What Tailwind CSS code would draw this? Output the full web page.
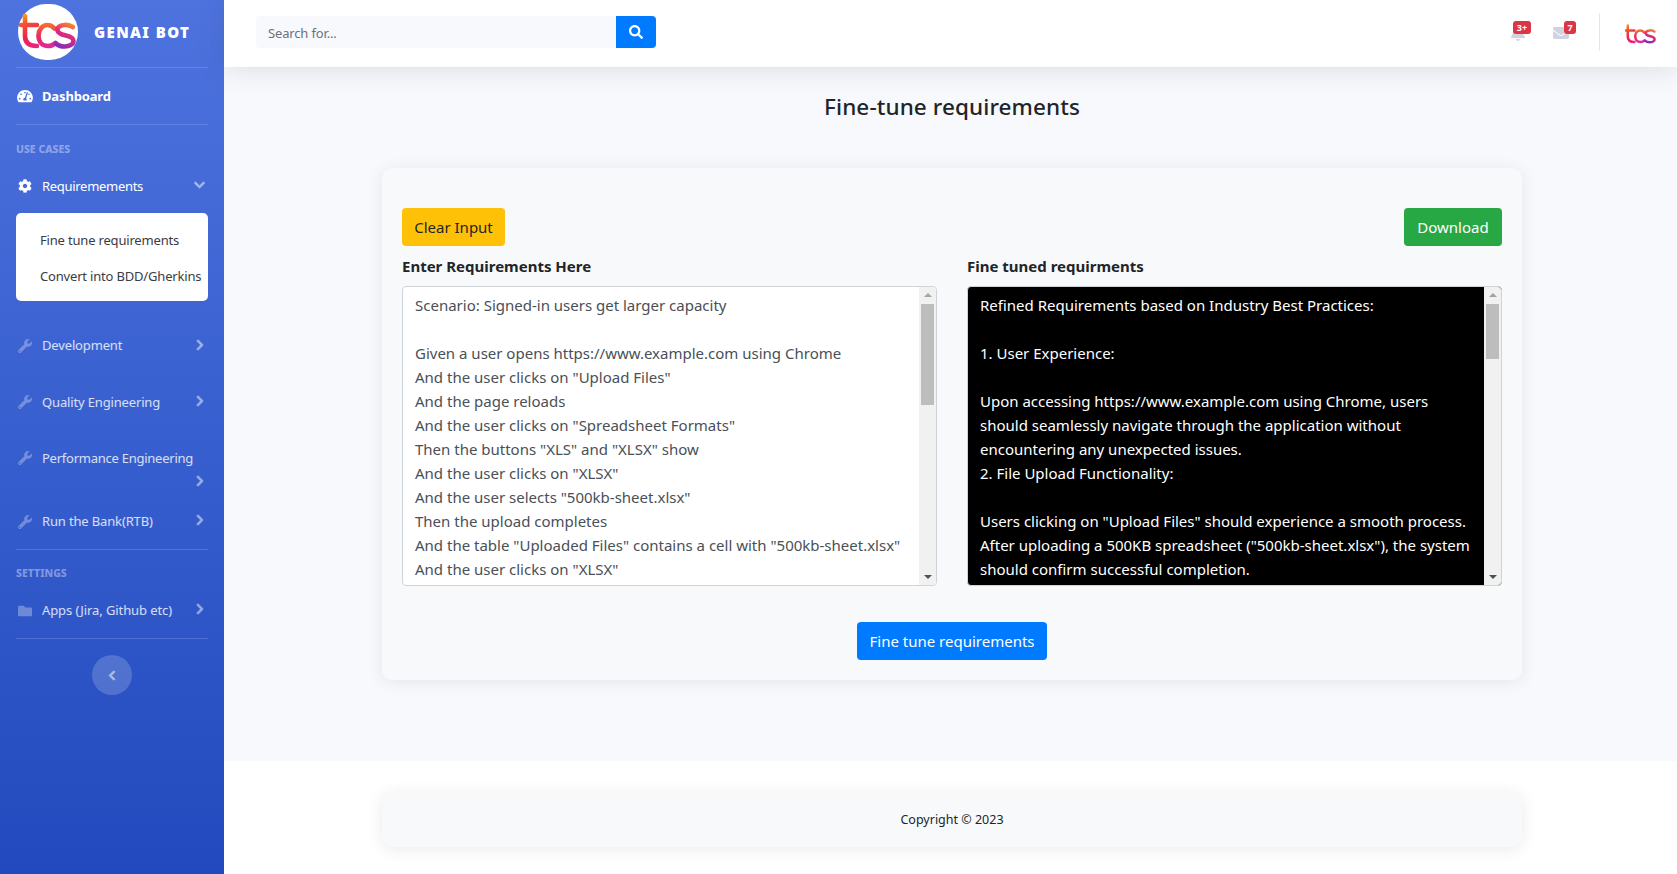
<!DOCTYPE html>
<html lang="en">
  <head>
    <meta charset="UTF-8" />
    <meta name="viewport" content="width=device-width, initial-scale=1.0" />
    <script src="https://cdn.jsdelivr.net/npm/@tailwindcss/browser@4"></script>
    <title>GenAI Bot</title>
  </head>
  <body class="bg-[#f8f9fc] font-['Noto_Sans','Open_Sans',sans-serif] text-[#212529]">
    <!-- shared logo and icon shapes -->
    <svg class="absolute w-0 h-0" aria-hidden="true">
      <defs>
        <linearGradient id="tcsA" gradientUnits="userSpaceOnUse" x1="5" y1="9" x2="22" y2="44">
          <stop offset="0" stop-color="#fbb116" />
          <stop offset="0.25" stop-color="#f4562e" />
          <stop offset="0.6" stop-color="#ec2450" />
          <stop offset="1" stop-color="#e8258a" />
        </linearGradient>
        <linearGradient id="tcsC" gradientUnits="userSpaceOnUse" x1="30" y1="20" x2="30" y2="44">
          <stop offset="0" stop-color="#f6712c" />
          <stop offset="0.5" stop-color="#ea2a5e" />
          <stop offset="1" stop-color="#dd2b9c" />
        </linearGradient>
        <linearGradient id="tcsB" gradientUnits="userSpaceOnUse" x1="54" y1="19" x2="42" y2="46">
          <stop offset="0" stop-color="#f79321" />
          <stop offset="0.4" stop-color="#e62a78" />
          <stop offset="1" stop-color="#7a2bc4" />
        </linearGradient>
        <symbol id="tcs" viewBox="0 0 60 56">
          <g fill="none" stroke-width="4.600" stroke-linecap="round">
            <path stroke="url(#tcsA)" d="M7 12V32C7 39 11 42 19 42M3 21H19" />
            <path stroke="url(#tcsC)" d="M36.500 24.500C34.500 22 32 21 29.500 21C24 21 20.500 26 20.500 31.500C20.500 37.500 24 42 30 42C33 42 35.500 41 37.500 39" />
            <path stroke="url(#tcsB)" d="M55 23C52 21 49 20.500 46 21C41.500 21.500 39 23.500 39.500 26.500C40 29.500 43.500 30.500 48 31.500C52.500 32.500 55.500 34 55.500 37C55.500 40.500 51 42.500 47 42.500C43.500 42.500 40 41.500 38 39.500" />
          </g>
        </symbol>
        <symbol id="wrench" viewBox="0 0 512 512"><path fill="currentColor" d="M507.73 109.1c-2.24-9.03-13.54-12.09-20.12-5.51l-74.36 74.36-67.88-11.31-11.31-67.88 74.36-74.36c6.62-6.62 3.43-17.9-5.66-20.16-47.38-11.74-99.55.91-136.58 37.93-39.64 39.64-50.55 97.1-34.05 147.2L18.74 402.76c-24.99 24.99-24.99 65.51 0 90.5 24.99 24.99 65.51 24.99 90.5 0l213.21-213.21c50.12 16.71 107.47 5.68 147.37-34.22 37.07-37.07 49.7-89.32 37.91-136.73zM64 472c-13.25 0-24-10.75-24-24 0-13.26 10.75-24 24-24s24 10.74 24 24c0 13.25-10.75 24-24 24z" /></symbol>
        <symbol id="chevron" viewBox="0 0 320 512"><path fill="currentColor" stroke="currentColor" stroke-width="36" d="M285.476 272.971L91.132 467.314c-9.373 9.373-24.569 9.373-33.941 0l-22.667-22.667c-9.357-9.357-9.375-24.522-.04-33.901L188.505 256 34.484 101.255c-9.335-9.379-9.317-24.544.04-33.901l22.667-22.667c9.373-9.373 24.569-9.373 33.941 0L285.475 239.03c9.373 9.372 9.373 24.568.001 33.941z" /></symbol>
      </defs>
    </svg>

    <div class="flex min-h-[874px]">
      <!-- Sidebar -->
      <aside class="w-[224px] shrink-0 px-[16px] bg-gradient-to-b from-[#4e73df] to-[#224abe] text-white/80 text-[13px] tracking-[-0.15px]">
        <div class="h-[67px] flex items-center">
          <div class="relative ml-[2px] mt-[-3px] w-[60px] h-[56px]">
            <div class="w-[60px] h-[56px] rounded-full bg-white"></div>
            <svg class="absolute inset-0 w-[60px] h-[56px]"><use href="#tcs" /></svg>
          </div>
          <span class="ml-[16px] mt-[-2px] text-[15px] leading-none font-black tracking-[1.4px] text-white">GENAI BOT</span>
        </div>
        <hr class="border-white/15" />
        <div class="h-[56px] flex items-center font-bold text-white">
          <svg viewBox="0 0 576 512" class="w-[16px] h-[14px] ml-[1px] mr-[9px]"><path fill="currentColor" d="M288 32C128.94 32 0 160.94 0 320c0 52.8 14.25 102.26 39.06 144.8 5.61 9.62 16.3 15.2 27.44 15.2h443c11.14 0 21.83-5.58 27.44-15.2C561.75 422.26 576 372.8 576 320c0-159.06-128.94-288-288-288zm0 64c14.71 0 26.58 10.13 30.32 23.65-1.11 2.26-2.64 4.23-3.45 6.67l-9.22 27.67c-5.13 3.49-10.97 6.01-17.64 6.01-17.67 0-32-14.33-32-32S270.33 96 288 96zM96 384c-17.67 0-32-14.33-32-32s14.33-32 32-32 32 14.33 32 32-14.33 32-32 32zm48-160c-17.67 0-32-14.33-32-32s14.33-32 32-32 32 14.33 32 32-14.33 32-32 32zm246.77-72.41l-61.33 184C343.13 347.33 352 364.54 352 384c0 11.72-3.38 22.55-8.88 32H232.88c-5.5-9.45-8.88-20.28-8.88-32 0-33.94 26.5-61.43 59.9-63.59l61.34-184.01c4.17-12.56 17.73-19.45 30.36-15.17 12.57 4.19 19.35 17.76 15.17 30.36zm14.66 57.2l15.52-46.55c3.47-1.29 7.13-2.23 11.05-2.23 17.67 0 32 14.33 32 32s-14.33 32-32 32c-11.38-.01-20.89-6.28-26.57-15.22zM480 384c-17.67 0-32-14.33-32-32s14.33-32 32-32 32 14.33 32 32-14.33 32-32 32z" /></svg>
          <span class="mt-[2px]">Dashboard</span>
        </div>
        <hr class="border-white/15" />
        <div class="h-[40px] pt-[16px] text-[10.500px] leading-[16px] font-extrabold text-white/40 tracking-normal">USE CASES</div>

        <div class="h-[42px] flex items-center text-white">
          <svg viewBox="0 0 512 512" class="w-[14px] h-[14px] ml-[2px] mr-[10px]"><path fill="currentColor" d="M487.4 315.7l-42.6-24.6c4.3-23.2 4.3-47 0-70.2l42.6-24.6c4.9-2.8 7.1-8.6 5.5-14-11.1-35.6-30-67.8-54.7-94.6-3.8-4.1-10-5.1-14.8-2.3L380.8 110c-17.9-15.4-38.5-27.3-60.8-35.1V25.8c0-5.6-3.9-10.5-9.4-11.7-36.7-8.2-74.3-7.8-109.2 0-5.5 1.2-9.4 6.1-9.4 11.7V75c-22.2 7.9-42.8 19.8-60.8 35.1L88.7 85.5c-4.9-2.8-11-1.9-14.8 2.3-24.7 26.7-43.6 58.9-54.7 94.6-1.7 5.4.6 11.2 5.5 14L67.3 221c-4.3 23.2-4.3 47 0 70.2l-42.6 24.6c-4.9 2.8-7.1 8.6-5.5 14 11.1 35.6 30 67.8 54.7 94.6 3.8 4.1 10 5.1 14.8 2.3l42.6-24.6c17.9 15.4 38.5 27.3 60.8 35.1v49.2c0 5.6 3.9 10.5 9.4 11.7 36.7 8.2 74.3 7.8 109.2 0 5.5-1.2 9.4-6.1 9.4-11.7v-49.2c22.2-7.9 42.8-19.8 60.8-35.1l42.6 24.6c4.9 2.8 11 1.9 14.8-2.3 24.7-26.7 43.6-58.9 54.7-94.6 1.5-5.5-.7-11.3-5.6-14.1zM256 336c-44.1 0-80-35.9-80-80s35.9-80 80-80 80 35.9 80 80-35.9 80-80 80z" /></svg>
          <span class="flex-1 mt-[1px] tracking-[-0.3px]">Requiremements</span>
          <svg viewBox="0 0 448 512" class="w-[11px] h-[12px] mr-[3px] mt-[-3px] text-white opacity-50"><path fill="currentColor" stroke="currentColor" stroke-width="30" d="M207.029 381.476L12.686 187.132c-9.373-9.373-9.373-24.569 0-33.941l22.667-22.667c9.357-9.357 24.522-9.375 33.901-.04L224 284.505l154.745-154.021c9.379-9.335 24.544-9.317 33.901.04l22.667 22.667c9.373 9.373 9.373 24.569 0 33.941L240.971 381.476c-9.373 9.372-24.569 9.372-33.942 0z" /></svg>
        </div>
        <div class="mt-[6px] mb-[17px] h-[88px] rounded-[5px] bg-white pl-[24px] pt-[9px] text-[#3a3b45] text-[13px] tracking-[-0.18px]">
          <div class="h-[36px] leading-[36px]">Fine tune requirements</div>
          <div class="h-[36px] leading-[36px] whitespace-nowrap">Convert into BDD/Gherkins</div>
        </div>

        <div class="h-[56px] flex items-center">
          <svg class="w-[14px] h-[14px] ml-[2px] mr-[10px] text-white/30"><use href="#wrench" /></svg>
          <span class="flex-1">Development</span>
          <svg class="w-[8px] h-[12px] mr-[4px] mt-[-3px] text-white opacity-50"><use href="#chevron" /></svg>
        </div>
        <div class="h-[56px] flex items-center">
          <svg class="w-[14px] h-[14px] ml-[2px] mr-[10px] text-white/30"><use href="#wrench" /></svg>
          <span class="flex-1 mt-[1px]">Quality Engineering</span>
          <svg class="w-[8px] h-[12px] mr-[4px] mt-[-3px] text-white opacity-50"><use href="#chevron" /></svg>
        </div>
        <div class="h-[64px] pt-[17px]">
          <div class="h-[22px] flex items-center">
            <svg class="w-[14px] h-[14px] ml-[2px] mr-[10px] text-white/30"><use href="#wrench" /></svg>
            <span class="mt-[1px] tracking-[-0.25px]">Performance Engineering</span>
          </div>
          <svg class="w-[8px] h-[12px] ml-auto mr-[4px] mt-[6px] text-white opacity-50"><use href="#chevron" /></svg>
        </div>
        <div class="h-[55px] flex items-center">
          <svg class="w-[14px] h-[14px] ml-[2px] mr-[10px] text-white/30"><use href="#wrench" /></svg>
          <span class="flex-1 mt-[1px]">Run the Bank(RTB)</span>
          <svg class="w-[8px] h-[12px] mr-[4px] mt-[-3px] text-white opacity-50"><use href="#chevron" /></svg>
        </div>
        <hr class="border-white/15" />
        <div class="h-[33px] pt-[15px] text-[10.500px] leading-[16px] font-extrabold text-white/40 tracking-normal">SETTINGS</div>
        <div class="h-[55px] flex items-center">
          <svg viewBox="0 0 512 512" class="w-[14px] h-[14px] ml-[2px] mr-[10px] text-white/30"><path fill="currentColor" d="M464 128H272l-64-64H48C21.49 64 0 85.49 0 112v288c0 26.51 21.49 48 48 48h416c26.51 0 48-21.49 48-48V176c0-26.51-21.49-48-48-48z" /></svg>
          <span class="flex-1 mt-[1px] tracking-[-0.1px]">Apps (Jira, Github etc)</span>
          <svg class="w-[8px] h-[12px] mr-[4px] mt-[-3px] text-white opacity-50"><use href="#chevron" /></svg>
        </div>
        <hr class="border-white/15" />
        <div class="mt-[16px] mx-auto w-[40px] h-[40px] rounded-full bg-white/20 flex items-center justify-center text-white opacity-90">
          <svg viewBox="0 0 320 512" class="w-[8px] h-[11px] opacity-60"><path fill="currentColor" stroke="currentColor" stroke-width="36" d="M34.52 239.03L228.87 44.69c9.37-9.37 24.57-9.37 33.94 0l22.67 22.67c9.36 9.36 9.37 24.52.04 33.9L131.49 256l154.02 154.75c9.34 9.38 9.32 24.54-.04 33.9l-22.67 22.67c-9.37 9.37-24.57 9.37-33.94 0L34.52 272.97c-9.37-9.37-9.37-24.57 0-33.94z" /></svg>
        </div>
      </aside>

      <div class="flex-1 flex flex-col min-w-0">
        <!-- Topbar -->
        <header class="relative z-10 h-[67px] bg-white shadow-[0_2px_28px_rgba(58,59,69,0.15)] flex items-center">
          <div class="ml-[32px] mt-[-3px] w-[400px] h-[32px] flex">
            <div class="flex-1 bg-[#f8f9fc] rounded-l-[4px] pl-[12px] text-[13px] leading-[34px] tracking-[-0.15px] text-[#6e707e]">Search for...</div>
            <div class="w-[40px] bg-[#007bff] rounded-r-[4px] flex items-center justify-center">
              <svg viewBox="0 0 512 512" class="w-[14px] h-[14px] text-white"><path fill="currentColor" d="M505 442.7L405.3 343c-4.5-4.5-10.6-7-17-7H372c27.6-35.3 44-79.7 44-128C416 93.1 322.9 0 208 0S0 93.1 0 208s93.1 208 208 208c48.3 0 92.7-16.4 128-44v16.3c0 6.4 2.5 12.5 7 17l99.7 99.7c9.4 9.4 24.6 9.4 33.9 0l28.3-28.3c9.4-9.4 9.4-24.6.1-34zM208 336c-70.7 0-128-57.2-128-128 0-70.7 57.2-128 128-128 70.7 0 128 57.2 128 128 0 70.7-57.2 128-128 128z" /></svg>
            </div>
          </div>
          <div class="ml-auto mt-[-3px] flex items-center">
            <div class="relative w-[14px] h-[16px] mt-[2px]">
              <svg viewBox="0 0 448 512" class="block w-[14px] h-[16px] text-[#d1d3e2]"><path fill="currentColor" d="M224 512c35.32 0 63.97-28.65 63.97-64H160.03c0 35.35 28.65 64 63.97 64zm215.39-149.71c-19.32-20.76-55.47-51.99-55.47-154.29 0-77.7-54.48-139.9-127.94-155.16V32c0-17.67-14.32-32-31.98-32s-31.98 14.33-31.98 32v20.84C118.56 68.1 64.08 130.3 64.08 208c0 102.3-36.15 133.53-55.47 154.29-6 6.45-8.66 14.16-8.61 21.71.11 16.4 12.98 32 32.1 32h383.8c19.12 0 32-15.6 32.1-32 .05-7.55-2.61-15.27-8.61-21.71z" /></svg>
              <span class="absolute left-[2px] top-[-4px] w-[18px] h-[13px] rounded-[3px] bg-[#dc3545] text-white text-[9px] font-bold leading-[13px] text-center">3+</span>
            </div>
            <div class="relative ml-[28px] w-[16px] h-[16px] mt-[2px]">
              <svg viewBox="0 0 512 512" class="block w-[16px] h-[16px] text-[#d1d3e2]"><path fill="currentColor" d="M502.3 190.8c3.9-3.1 9.7-.2 9.7 4.7V400c0 26.5-21.5 48-48 48H48c-26.5 0-48-21.500-48-48V195.600c0-5 5.700-7.800 9.700-4.700 22.400 17.400 52.100 39.500 154.100 113.600 21.100 15.400 56.700 47.800 92.200 47.600 35.700.3 72-32.800 92.300-47.600 102-74.100 131.600-96.300 154-113.700zM256 320c23.200.4 56.600-29.200 73.400-41.400 132.700-96.300 142.800-104.700 173.400-128.700 5.800-4.500 9.200-11.500 9.200-18.900v-19c0-26.500-21.500-48-48-48H48C21.500 64 0 85.500 0 112v19c0 7.400 3.400 14.300 9.200 18.900 30.600 23.900 40.700 32.400 173.400 128.700 16.800 12.200 50.200 41.800 73.400 41.400z" /></svg>
              <span class="absolute left-[11px] top-[-4px] w-[12px] h-[13px] rounded-[3px] bg-[#dc3545] text-white text-[9px] font-bold leading-[13px] text-center">7</span>
            </div>
            <div class="ml-[30px] w-px h-[38px] bg-[#e3e6f0]"></div>
            <svg viewBox="2 10 56 35" class="ml-[25px] mr-[21px] mt-[3px] w-[31px] h-[20px]"><use href="#tcs" width="60" height="56" /></svg>
          </div>
        </header>

        <!-- Page -->
        <main class="flex-1 pl-[158px]">
          <h1 class="w-[1140px] h-[101px] pt-[25px] text-center text-[22.500px] leading-[30px] font-medium tracking-[0.1px]">Fine-tune requirements</h1>
          <section class="w-[1140px] h-[512px] rounded-[10px] bg-[#f8f9fa] shadow-[0_2px_16px_rgba(58,59,69,0.1)] px-[20px] pt-[40px] text-[15px]">
            <div class="flex justify-between">
              <button class="w-[103px] h-[38px] rounded-[4px] bg-[#ffc107] text-[#212529]">Clear Input</button>
              <button class="w-[98px] h-[38px] rounded-[4px] bg-[#28a745] text-white">Download</button>
            </div>
            <div class="mt-[8px] grid grid-cols-2 gap-[30px]">
              <div>
                <div class="h-[24px] mb-[8px] font-bold leading-[24px]">Enter Requirements Here</div>
                <div class="h-[300px] rounded-[4px] border border-[#ced4da] bg-white flex overflow-hidden text-[#495057]">
                  <div class="flex-1 min-w-0 pl-[12px] pt-[6px] leading-[24px] whitespace-pre overflow-hidden">Scenario: Signed-in users get larger capacity

Given a user opens https://www.example.com using Chrome
And the user clicks on "Upload Files"
And the page reloads
And the user clicks on "Spreadsheet Formats"
Then the buttons "XLS" and "XLSX" show
And the user clicks on "XLSX"
And the user selects "500kb-sheet.xlsx"
Then the upload completes
And the table "Uploaded Files" contains a cell with "500kb-sheet.xlsx"
And the user clicks on "XLSX"</div>
                  <div class="w-[17px] shrink-0 bg-[#f1f1f1] flex flex-col items-center">
                    <div class="mt-[6px] border-x-[4px] border-x-transparent border-b-[4px] border-b-[#a3a3a3]"></div>
                    <div class="mt-[7px] w-[13px] h-[101px] bg-[#bdbdbd]"></div>
                    <div class="mt-auto mb-[6px] border-x-[4px] border-x-transparent border-t-[4px] border-t-[#505050]"></div>
                  </div>
                </div>
              </div>
              <div>
                <div class="h-[24px] mb-[8px] font-bold leading-[24px]">Fine tuned requirments</div>
                <div class="h-[300px] rounded-[4px] border border-[#ced4da] bg-black flex overflow-hidden text-white">
                  <div class="flex-1 min-w-0 pl-[12px] pt-[6px] leading-[24px] whitespace-pre overflow-hidden">Refined Requirements based on Industry Best Practices:

1. User Experience:

Upon accessing https://www.example.com using Chrome, users
should seamlessly navigate through the application without
encountering any unexpected issues.
2. File Upload Functionality:

Users clicking on "Upload Files" should experience a smooth process.
After uploading a 500KB spreadsheet ("500kb-sheet.xlsx"), the system
should confirm successful completion.</div>
                  <div class="w-[17px] shrink-0 bg-[#f1f1f1] flex flex-col items-center">
                    <div class="mt-[6px] border-x-[4px] border-x-transparent border-b-[4px] border-b-[#a3a3a3]"></div>
                    <div class="mt-[7px] w-[13px] h-[55px] bg-[#bdbdbd]"></div>
                    <div class="mt-auto mb-[6px] border-x-[4px] border-x-transparent border-t-[4px] border-t-[#505050]"></div>
                  </div>
                </div>
              </div>
            </div>
            <div class="mt-[36px] flex justify-center">
              <button class="w-[190px] h-[38px] rounded-[4px] bg-[#007bff] text-white">Fine tune requirements</button>
            </div>
          </section>
        </main>

        <!-- Footer -->
        <footer class="h-[113px] bg-white pt-[32px] pl-[158px]">
          <div class="w-[1140px] h-[54px] rounded-[10px] bg-[#f8f9fa] shadow-[0_2px_16px_rgba(58,59,69,0.1)] flex items-center justify-center pt-[1px] text-[12.500px] text-[#212529]">Copyright © 2023</div>
        </footer>
      </div>
    </div>
  </body>
</html>
